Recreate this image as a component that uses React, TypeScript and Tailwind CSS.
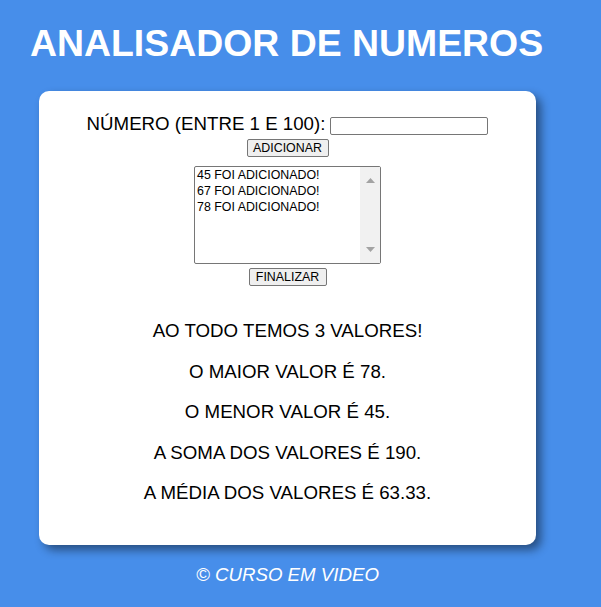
const messages = ["45 FOI ADICIONADO!", "67 FOI ADICIONADO!", "78 FOI ADICIONADO!"];

const results = [
  "AO TODO TEMOS 3 VALORES!",
  "O MAIOR VALOR É 78.",
  "O MENOR VALOR É 45.",
  "A SOMA DOS VALORES É 190.",
  "A MÉDIA DOS VALORES É 63.33.",
];

function Arrow({ up }: { up?: boolean }) {
  return (
    <svg width="9" height="5" viewBox="0 0 9 5" className="block">
      {up ? (
        <polygon points="4.5,0 9,5 0,5" fill="#a3a3a3" />
      ) : (
        <polygon points="0,0 9,0 4.5,5" fill="#a3a3a3" />
      )}
    </svg>
  );
}

export default function App() {
  return (
    <div className="min-h-screen bg-[#478eea] font-['Liberation_Sans',Arial,sans-serif] text-black">
      <h1 className="pl-[30px] pt-[22px] text-[37.4px] font-bold leading-[43px] text-white">
        ANALISADOR DE NUMEROS
      </h1>

      <main className="ml-[39px] mt-[26px] w-[497px] rounded-[10px] bg-white pt-[22px] pb-[41px] shadow-[5px_5px_10px_rgba(0,0,0,0.45)]">
        <div className="flex flex-col items-center">
          <div className="flex items-end gap-[5px] text-[18.7px] leading-[21.5px]">
            <label htmlFor="num">NÚMERO (ENTRE 1 E 100):</label>
            <input
              id="num"
              type="text"
              className="h-[18px] w-[158px] rounded-[2px] border border-[#767676] bg-white outline-none"
            />
          </div>
          <button className="mt-[4.5px] h-[18px] w-[82px] rounded-[2px] border border-[#767676] bg-[#efefef] text-[12.4px] leading-[16px]">
            ADICIONAR
          </button>

          <div className="mt-[9px] flex h-[98px] w-[187px] rounded-[2px] border border-[#767676] bg-white">
            <div className="flex-1 pl-[2px] text-[12.4px] leading-[16px]">
              {messages.map((m) => (
                <div key={m}>{m}</div>
              ))}
            </div>
            <div className="flex w-[20px] flex-col items-center justify-between bg-[#f1f1f1] py-[11px]">
              <Arrow up />
              <Arrow />
            </div>
          </div>

          <button className="mt-[4px] h-[18px] w-[78px] rounded-[2px] border border-[#767676] bg-[#efefef] text-[12.4px] leading-[16px]">
            FINALIZAR
          </button>
        </div>

        <div className="mt-[34px] flex flex-col items-center gap-[19px] text-[18.7px] leading-[21.5px]">
          {results.map((r) => (
            <p key={r}>{r}</p>
          ))}
        </div>
      </main>

      <footer className="ml-[39px] mt-[19px] w-[497px] text-center text-[18.7px] italic leading-[21.5px] text-white">
        © CURSO EM VIDEO
      </footer>
    </div>
  );
}
